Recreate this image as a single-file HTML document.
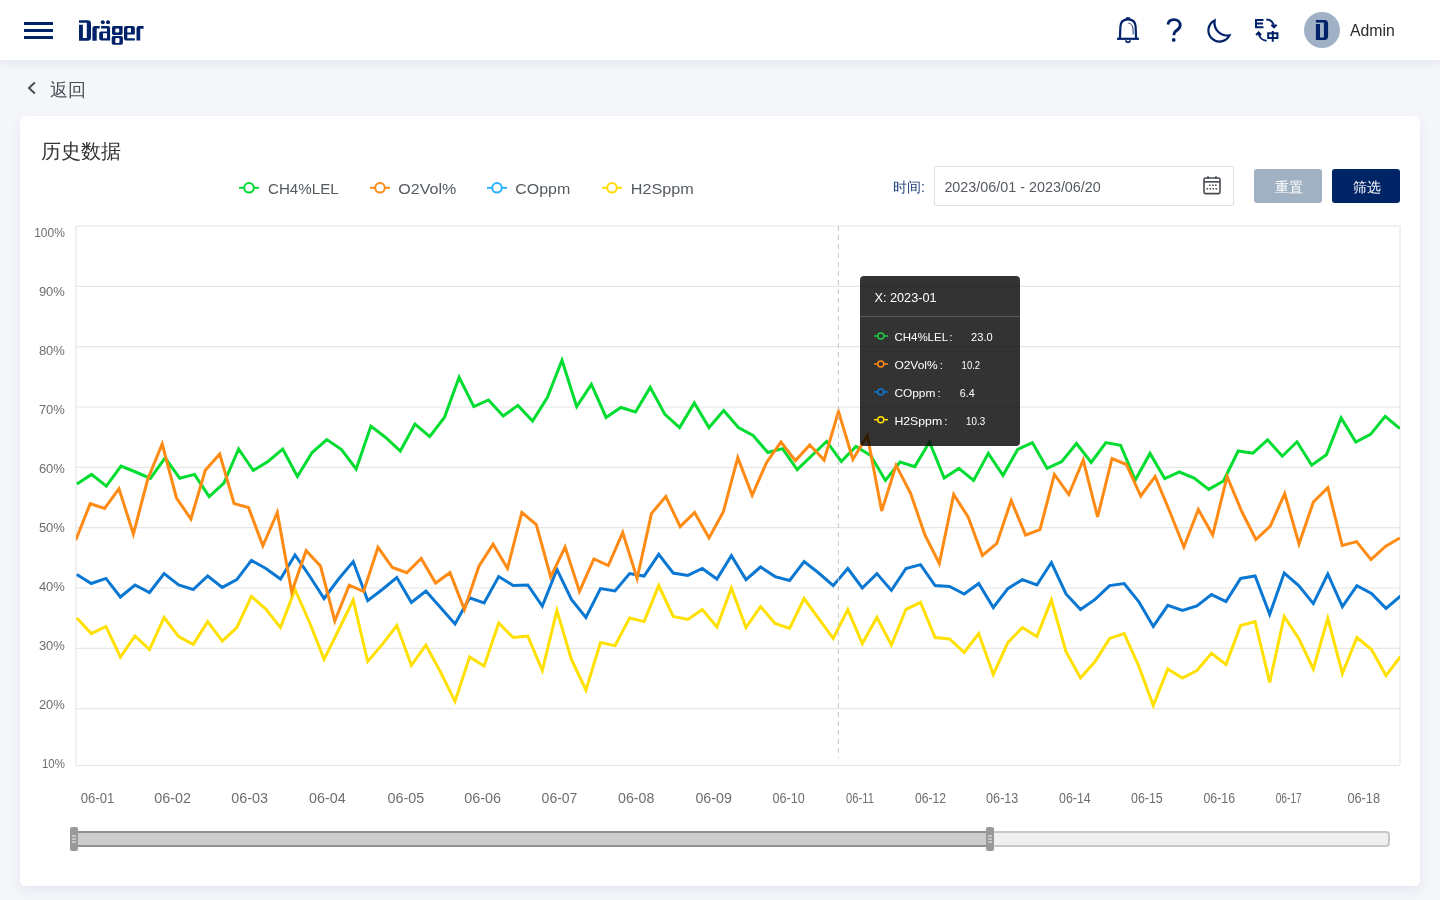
<!DOCTYPE html>
<html><head><meta charset="utf-8">
<style>
*{box-sizing:border-box;margin:0;padding:0}
html,body{width:1440px;height:900px;overflow:hidden}
body{background:#f4f6fa;font-family:"Liberation Sans",sans-serif;position:relative}
.abs{position:absolute}
#hdr{left:0;top:0;width:1440px;height:60px;background:#fff;box-shadow:0 2px 10px rgba(40,60,100,0.10)}
#card{left:20px;top:116px;width:1400px;height:770px;background:#fff;border-radius:5px;box-shadow:0 5px 12px rgba(40,60,100,0.07)}
.t{position:absolute;white-space:nowrap;line-height:1;will-change:transform}
</style></head><body>
<div id="hdr" class="abs"></div>
<div id="card" class="abs"></div>

<!-- header text -->
<!-- back -->
<div class="t" style="left:50px;top:80.5px;font-size:18px;color:#4a4e55">返回</div>
<!-- title -->
<div class="t" style="left:40.5px;top:141.5px;font-size:19.6px;color:#333">历史数据</div>
<!-- legend text -->
<!-- time -->
<div class="t" style="left:892.5px;top:180px;font-size:14px;color:#24447a">时间:</div>
<div class="abs" style="left:934px;top:166px;width:300px;height:40px;border:1px solid #dcdfe4;border-radius:3px;background:#fff"></div>
<div class="abs" style="left:1254px;top:169px;width:68px;height:34px;border-radius:3px;background:#a1b1c4"></div>
<div class="t" style="left:1274.5px;top:180px;font-size:14px;color:#fff">重置</div>
<div class="abs" style="left:1332px;top:169px;width:68px;height:34px;border-radius:3px;background:#002566"></div>
<div class="t" style="left:1352.5px;top:180px;font-size:14px;color:#fff">筛选</div>

<svg class="abs" style="left:0;top:0;will-change:transform" width="1440" height="900" viewBox="0 0 1440 900">
  <!-- hamburger -->
  <g fill="#002366">
    <rect x="24" y="22" width="29" height="3"/>
    <rect x="24" y="29" width="29" height="3"/>
    <rect x="24" y="36" width="29" height="3"/>
  </g>
  <!-- logo -->
  <g fill="#012169" fill-rule="evenodd">
    <path d="M79,20.15 H87.8 Q91,20.15 91,23.5 V37.5 Q91,40.7 87.8,40.7 H79 V24.65 H82.9 V38 H86.8 V22.7 H79 Z"/>
    <path d="M92.4,40.7 V28.3 Q92.4,26 94.8,26 H99.7 V28.6 H96.7 V40.7 Z"/>
    <path d="M101.1,26 H108.3 Q110.1,26 110.1,27.8 V40.4 H101 Q99.2,40.4 99.2,38.6 V33.2 Q99.2,31.4 101,31.4 H107 V28.4 H101.1 Z M103,33.25 V38.2 H107 V33.25 Z"/>
    <circle cx="102.8" cy="22.2" r="2"/><circle cx="108" cy="22.2" r="2"/>
    <path d="M113.8,26 H122.6 V33.2 Q122.6,35 120.8,35 H113.8 Q112,35 112,33.2 V27.8 Q112,26 113.8,26 Z M116.3,28.4 Q115.3,28.4 115.3,29.4 V31.6 Q115.3,32.6 116.3,32.6 H118.2 Q119.2,32.6 119.2,31.6 V29.4 Q119.2,28.4 118.2,28.4 Z"/>
    <path d="M113.5,36 H121.1 Q122.9,36 122.9,37.8 V43 Q122.9,44.75 121.1,44.75 H113.5 Q111.7,44.75 111.7,43 V37.8 Q111.7,36 113.5,36 Z M116.3,37.9 Q115.3,37.9 115.3,38.9 V41.9 Q115.3,42.9 116.3,42.9 H118.5 Q119.5,42.9 119.5,41.9 V38.9 Q119.5,37.9 118.5,37.9 Z"/>
    <path d="M126,26 H132.8 Q134.8,26 134.8,28 V34.5 H127.3 V38.2 H134.8 V40.4 H126 Q124,40.4 124,38.4 V28 Q124,26 126,26 Z M128.3,28 Q127.3,28 127.3,29.2 V32.6 H131 V29.2 Q131,28 130,28 Z"/>
    <path d="M136.5,40.4 V28.3 Q136.5,26 138.8,26 H143.6 V28.7 H140.2 V40.4 Z"/>
  </g>
  <!-- bell -->
  <g fill="none" stroke="#012169" stroke-width="2.2">
    <path d="M1119.9,38.6 L1120.4,26.5 C1120.7,21.8 1123.8,19.3 1128,19.3 C1132.2,19.3 1135.3,21.8 1135.6,26.5 L1136.1,38.6"/>
    <path d="M1117,38.8 H1139"/>
    <path d="M1125.9,40.2 A2.1,2.1 0 0 0 1130.1,40.2" stroke-width="1.6"/>
    <path d="M1128.4,23 C1131,23.6 1132.7,25.5 1132.9,28 L1133.2,34.5" stroke-width="0.9"/>
  </g>
  <rect x="1125.8" y="17.3" width="4.4" height="2.4" rx="0.8" fill="#012169"/>
  <!-- question -->
  <path d="M1168,24.5 C1168.4,20.8 1171,19.6 1174,19.6 C1177.6,19.6 1180.2,22 1180.2,25.2 C1180.2,28.5 1177.4,29.8 1175.5,31.4 C1174.3,32.5 1173.8,33.3 1173.8,35.2" fill="none" stroke="#012169" stroke-width="2.9"/>
  <circle cx="1173.7" cy="39.9" r="1.9" fill="#012169"/>
  <!-- moon -->
  <path d="M1214.66,20.41 A11.1,11.1 0 1 0 1229.49,35.24 A12.75,12.75 0 0 1 1214.66,20.41 Z" fill="none" stroke="#012169" stroke-width="2.2" stroke-linejoin="miter"/>
  <!-- translate -->
  <g fill="none" stroke="#012169" stroke-width="2">
    <path d="M1263.5,19.9 H1256 V27.3 H1263.5 M1256,23.6 H1263"/>
    <path d="M1266.3,19.4 C1270.4,19.6 1273.4,22.2 1274,26.5"/>
    <path d="M1271.4,24.8 L1274,27.3 L1276.6,24.8"/>
    <path d="M1258.6,32.5 C1258.9,37.5 1262.4,40.4 1266.6,40.7"/>
    <path d="M1256.1,35 L1258.6,32.5 L1261.1,35"/>
    <path d="M1268.2,33.2 H1277.4 V38 H1268.2 Z M1272.8,31 V41.8"/>
  </g>
  <!-- avatar -->
  <circle cx="1322" cy="30" r="18" fill="#a0b1c5"/>
  <path d="M1315.9,20.05 H1324.5 Q1328.1,20.05 1328.1,24 V36 Q1328.1,40 1324.5,40 H1315.9 V24.1 H1320 V37.5 H1323.9 V22.5 H1315.9 Z" fill="#012169"/>
  <!-- back chevron -->
  <path d="M34.8,82.5 L29,88 L34.8,93.5" fill="none" stroke="#4a4e55" stroke-width="2"/>

  <!-- legend icons -->
  <g fill="#fff" stroke-width="2">
    <g stroke="#00d930"><path d="M239,187.8 H259"/><circle cx="249" cy="187.8" r="4.8"/></g>
    <g stroke="#ff8c1a"><path d="M370,187.8 H390"/><circle cx="380" cy="187.8" r="4.8"/></g>
    <g stroke="#2bb3ff"><path d="M487,187.8 H507"/><circle cx="497" cy="187.8" r="4.8"/></g>
    <g stroke="#ffdc00"><path d="M602,187.8 H622"/><circle cx="612" cy="187.8" r="4.8"/></g>
  </g>
  <!-- calendar -->
  <g fill="none" stroke="#474b50" stroke-width="1.6">
    <rect x="1204" y="178" width="16" height="15.6" rx="1.5"/>
    <path d="M1204,181.8 H1220"/>
    <path d="M1208,176.2 V179 M1216,176.2 V179"/>
  </g>
  <g fill="#474b50">
    <rect x="1209" y="184.5" width="1.6" height="1.5"/><rect x="1212" y="184.5" width="1.6" height="1.5"/><rect x="1215" y="184.5" width="1.6" height="1.5"/>
    <rect x="1206.5" y="188" width="1.6" height="1.5"/><rect x="1209.5" y="188" width="1.6" height="1.5"/><rect x="1212.5" y="188" width="1.6" height="1.5"/><rect x="1215.5" y="188" width="1.6" height="1.5"/>
  </g>

  <g font-family="Liberation Sans" font-size="15.5" fill="#555b61">
    <text x="268" y="194.2" textLength="70.7" lengthAdjust="spacingAndGlyphs">CH4%LEL</text>
    <text x="398.3" y="194.2" textLength="58" lengthAdjust="spacingAndGlyphs">O2Vol%</text>
    <text x="515.3" y="194.2" textLength="55" lengthAdjust="spacingAndGlyphs">COppm</text>
    <text x="630.8" y="194.2" textLength="62.9" lengthAdjust="spacingAndGlyphs">H2Sppm</text>
  </g>
  <text x="1350" y="36" font-family="Liberation Sans" font-size="15.6" fill="#2b2b2b" textLength="44.8" lengthAdjust="spacingAndGlyphs">Admin</text>
  <text x="944.4" y="192" font-family="Liberation Sans" font-size="14.1" fill="#555a60" textLength="156.4" lengthAdjust="spacingAndGlyphs">2023/06/01 - 2023/06/20</text>
  <!-- chart grid -->
  <g stroke="#e6e6e6" stroke-width="1.2" fill="none"><line x1="76" y1="226.0" x2="1400" y2="226.0"/><line x1="76" y1="286.3" x2="1400" y2="286.3"/><line x1="76" y1="346.7" x2="1400" y2="346.7"/><line x1="76" y1="407.0" x2="1400" y2="407.0"/><line x1="76" y1="467.3" x2="1400" y2="467.3"/><line x1="76" y1="527.6" x2="1400" y2="527.6"/><line x1="76" y1="588.0" x2="1400" y2="588.0"/><line x1="76" y1="648.3" x2="1400" y2="648.3"/><line x1="76" y1="708.6" x2="1400" y2="708.6"/><line x1="76" y1="765.5" x2="1400" y2="765.5"/><line x1="76" y1="226" x2="76" y2="765.5"/><line x1="1400" y1="226" x2="1400" y2="765.5"/></g>
  <g font-family="Liberation Sans" font-size="13.4" fill="#6e6e6e"><text x="34.2" y="236.9" textLength="30.7" lengthAdjust="spacingAndGlyphs">100%</text><text x="38.9" y="295.9" textLength="26" lengthAdjust="spacingAndGlyphs">90%</text><text x="38.9" y="354.9" textLength="26" lengthAdjust="spacingAndGlyphs">80%</text><text x="38.9" y="413.9" textLength="26" lengthAdjust="spacingAndGlyphs">70%</text><text x="38.9" y="472.9" textLength="26" lengthAdjust="spacingAndGlyphs">60%</text><text x="38.9" y="531.9" textLength="26" lengthAdjust="spacingAndGlyphs">50%</text><text x="38.9" y="590.9" textLength="26" lengthAdjust="spacingAndGlyphs">40%</text><text x="38.9" y="649.9" textLength="26" lengthAdjust="spacingAndGlyphs">30%</text><text x="38.9" y="708.9" textLength="26" lengthAdjust="spacingAndGlyphs">20%</text><text x="41.9" y="767.9" textLength="23" lengthAdjust="spacingAndGlyphs">10%</text></g>
  <g font-family="Liberation Sans" font-size="14.6" fill="#6e6e6e"><text x="80.8" y="803" textLength="33.6" lengthAdjust="spacingAndGlyphs">06-01</text><text x="154.2" y="803" textLength="36.7" lengthAdjust="spacingAndGlyphs">06-02</text><text x="231.3" y="803" textLength="36.7" lengthAdjust="spacingAndGlyphs">06-03</text><text x="309.1" y="803" textLength="36.7" lengthAdjust="spacingAndGlyphs">06-04</text><text x="387.5" y="803" textLength="36.8" lengthAdjust="spacingAndGlyphs">06-05</text><text x="464.2" y="803" textLength="36.8" lengthAdjust="spacingAndGlyphs">06-06</text><text x="541.6" y="803" textLength="35.8" lengthAdjust="spacingAndGlyphs">06-07</text><text x="618.0" y="803" textLength="36.4" lengthAdjust="spacingAndGlyphs">06-08</text><text x="695.4" y="803" textLength="36.5" lengthAdjust="spacingAndGlyphs">06-09</text><text x="772.5" y="803" textLength="32.3" lengthAdjust="spacingAndGlyphs">06-10</text><text x="846.1" y="803" textLength="27.8" lengthAdjust="spacingAndGlyphs">06-11</text><text x="914.9" y="803" textLength="31.2" lengthAdjust="spacingAndGlyphs">06-12</text><text x="986.1" y="803" textLength="32.3" lengthAdjust="spacingAndGlyphs">06-13</text><text x="1059.0" y="803" textLength="31.7" lengthAdjust="spacingAndGlyphs">06-14</text><text x="1131.0" y="803" textLength="31.7" lengthAdjust="spacingAndGlyphs">06-15</text><text x="1203.4" y="803" textLength="31.7" lengthAdjust="spacingAndGlyphs">06-16</text><text x="1275.7" y="803" textLength="26" lengthAdjust="spacingAndGlyphs">06-17</text><text x="1347.4" y="803" textLength="32.7" lengthAdjust="spacingAndGlyphs">06-18</text></g>

  <defs><clipPath id="clip"><rect x="76" y="200" width="1324" height="566"/></clipPath></defs>
  <g clip-path="url(#clip)" fill="none" stroke-width="3" stroke-linejoin="miter">
    <path d="M76.8,618.0 L91.3,633.6 L105.9,626.4 L120.4,657.0 L135.0,636.0 L149.5,649.5 L164.1,617.4 L178.6,636.6 L193.2,644.4 L207.7,621.6 L222.3,641.1 L236.8,627.6 L251.4,596.4 L265.9,609.0 L280.5,627.6 L295.0,589.5 L309.6,622.5 L324.1,659.4 L338.6,630.0 L353.2,600.0 L367.7,661.5 L382.3,644.4 L396.8,625.5 L411.4,665.4 L425.9,645.0 L440.5,672.0 L455.0,701.4 L469.6,657.0 L484.1,666.0 L498.7,623.0 L513.2,637.5 L527.8,636.0 L542.3,670.5 L556.9,610.5 L571.4,659.4 L585.9,690.0 L600.5,642.6 L615.0,645.6 L629.6,618.0 L644.1,621.6 L658.7,585.6 L673.2,616.5 L687.8,619.5 L702.3,609.6 L716.9,627.0 L731.4,588.0 L746.0,627.6 L760.5,606.6 L775.1,623.4 L789.6,628.5 L804.1,598.5 L818.7,618.6 L833.2,638.4 L847.8,609.6 L862.3,643.5 L876.9,617.4 L891.4,645.0 L906.0,609.3 L920.5,602.4 L935.1,637.5 L949.6,639.0 L964.2,652.5 L978.7,633.6 L993.3,674.4 L1007.8,642.6 L1022.4,627.6 L1036.9,636.6 L1051.4,600.0 L1066.0,651.6 L1080.5,678.0 L1095.1,661.5 L1109.6,638.4 L1124.2,633.6 L1138.7,666.0 L1153.3,705.6 L1167.8,669.0 L1182.4,678.0 L1196.9,670.5 L1211.5,653.4 L1226.0,664.5 L1240.6,625.5 L1255.1,621.6 L1269.7,682.5 L1284.2,616.5 L1298.7,638.4 L1313.3,669.0 L1327.8,618.3 L1342.4,673.5 L1356.9,637.5 L1371.5,649.5 L1386.0,675.6 L1400.6,656.4" stroke="#ffe000"/>
    <path d="M76.8,574.5 L91.3,583.5 L105.9,578.4 L120.4,597.0 L135.0,585.0 L149.5,592.5 L164.1,573.6 L178.6,585.0 L193.2,589.5 L207.7,576.0 L222.3,587.4 L236.8,579.6 L251.4,560.4 L265.9,568.5 L280.5,579.0 L295.0,555.0 L309.6,576.0 L324.1,598.5 L338.6,579.0 L353.2,561.6 L367.7,600.6 L382.3,589.5 L396.8,577.5 L411.4,602.4 L425.9,591.0 L440.5,607.5 L455.0,624.0 L469.6,597.9 L484.1,603.0 L498.7,576.5 L513.2,585.6 L527.8,585.0 L542.3,606.0 L556.9,569.4 L571.4,599.4 L585.9,617.4 L600.5,588.6 L615.0,591.0 L629.6,573.6 L644.1,576.0 L658.7,554.4 L673.2,573.0 L687.8,575.4 L702.3,568.5 L716.9,579.0 L731.4,555.6 L746.0,579.6 L760.5,567.0 L775.1,576.6 L789.6,580.5 L804.1,561.6 L818.7,573.0 L833.2,585.6 L847.8,568.5 L862.3,588.0 L876.9,573.6 L891.4,590.4 L906.0,568.5 L920.5,564.6 L935.1,585.6 L949.6,586.5 L964.2,594.0 L978.7,583.5 L993.3,607.5 L1007.8,588.6 L1022.4,579.6 L1036.9,585.0 L1051.4,562.5 L1066.0,594.0 L1080.5,609.6 L1095.1,599.4 L1109.6,585.6 L1124.2,583.5 L1138.7,601.5 L1153.3,626.4 L1167.8,605.4 L1182.4,610.5 L1196.9,606.0 L1211.5,594.6 L1226.0,601.5 L1240.6,578.4 L1255.1,576.0 L1269.7,614.4 L1284.2,573.0 L1298.7,585.6 L1313.3,603.6 L1327.8,574.0 L1342.4,606.6 L1356.9,585.6 L1371.5,593.4 L1386.0,608.4 L1400.6,596.0" stroke="#0a78d2"/>
    <path d="M76.9,483.9 L91.6,474.4 L106.3,486.1 L121.0,466.1 L135.7,472.0 L150.4,478.3 L165.1,457.8 L179.8,478.3 L194.5,474.4 L209.2,496.7 L223.9,483.1 L238.6,449.0 L253.3,470.5 L268.0,461.5 L282.7,449.0 L297.4,476.5 L312.1,452.5 L326.8,439.6 L341.5,449.5 L356.2,469.0 L370.9,426.1 L385.6,437.5 L400.3,451.0 L415.0,424.0 L429.7,436.6 L444.4,417.4 L459.1,377.3 L473.8,406.6 L488.5,400.0 L503.2,416.0 L517.9,405.4 L532.6,421.0 L547.3,397.6 L562.0,360.2 L576.7,406.6 L591.4,384.4 L606.1,417.4 L620.8,407.5 L635.5,412.0 L650.2,387.4 L664.9,414.4 L679.6,427.6 L694.3,403.0 L709.0,427.6 L723.7,410.5 L738.4,427.6 L753.1,435.4 L767.8,452.5 L782.5,448.6 L797.2,469.6 L811.9,455.5 L826.6,441.4 L841.3,461.5 L856.0,446.5 L870.7,455.5 L885.4,480.4 L900.1,462.0 L914.8,466.6 L929.5,442.0 L944.2,478.0 L958.9,468.4 L973.6,480.4 L988.3,453.4 L1003.0,475.3 L1017.7,449.5 L1032.4,442.6 L1047.1,468.4 L1061.8,461.5 L1076.5,443.5 L1091.2,462.4 L1105.9,442.6 L1120.6,445.3 L1135.3,480.0 L1150.0,453.4 L1164.7,478.6 L1179.4,472.0 L1194.1,478.0 L1208.8,489.4 L1223.5,481.0 L1238.2,451.0 L1252.9,453.2 L1267.6,439.8 L1282.3,456.2 L1297.0,441.8 L1311.7,465.2 L1326.4,454.8 L1341.1,417.9 L1355.8,442.1 L1370.5,434.4 L1385.2,416.3 L1399.9,428.5" stroke="#00dc30"/>
    <path d="M75.8,540.0 L90.2,503.7 L104.6,508.4 L119.0,488.7 L133.4,534.0 L147.8,479.0 L162.2,444.0 L176.5,498.0 L190.9,519.0 L205.3,470.3 L219.7,454.0 L234.1,503.6 L248.5,507.5 L262.9,545.8 L277.3,512.5 L291.7,592.0 L306.1,550.7 L320.5,566.0 L334.8,621.0 L349.2,585.2 L363.6,591.5 L378.0,547.3 L392.4,567.5 L406.8,572.7 L421.2,558.5 L435.6,583.0 L450.0,572.7 L464.4,609.5 L478.8,566.5 L493.1,544.2 L507.5,568.5 L521.9,512.5 L536.3,524.5 L550.7,577.0 L565.1,547.0 L579.5,591.4 L593.9,559.0 L608.3,565.6 L622.7,532.6 L637.1,578.5 L651.5,513.4 L665.8,496.6 L680.2,526.6 L694.6,512.5 L709.0,538.0 L723.4,511.6 L737.8,457.6 L752.2,495.4 L766.6,462.4 L781.0,442.0 L795.4,460.6 L809.8,445.0 L824.1,460.0 L838.5,411.6 L852.9,459.4 L867.3,435.4 L881.7,511.0 L896.1,465.4 L910.5,493.0 L924.9,535.0 L939.3,563.5 L953.7,494.5 L968.1,517.0 L982.4,555.4 L996.8,543.4 L1011.2,500.5 L1025.6,535.0 L1040.0,529.6 L1054.4,474.4 L1068.8,494.5 L1083.2,460.0 L1097.6,517.0 L1112.0,458.5 L1126.4,464.5 L1140.7,496.0 L1155.1,476.5 L1169.5,511.0 L1183.9,547.0 L1198.3,509.5 L1212.7,535.0 L1227.1,476.5 L1241.5,511.0 L1255.9,539.5 L1270.3,526.0 L1284.7,493.6 L1299.0,544.0 L1313.4,502.0 L1327.8,487.6 L1342.2,545.5 L1356.6,541.6 L1371.0,559.6 L1385.4,546.4 L1399.8,538.0" stroke="#ff8a14"/>
  </g>
  <!-- axis pointer -->
  <line x1="838.4" y1="226" x2="838.4" y2="758" stroke="#c8c8c8" stroke-width="1" stroke-dasharray="5,4"/>

  <!-- slider -->
  <rect x="75" y="832" width="1314" height="14" rx="3" fill="#f0f0f0" stroke="#c8c8c8" stroke-width="2"/>
  <rect x="75" y="832" width="915" height="14" fill="#cccccc" stroke="#909090" stroke-width="2"/>
  <g fill="#9a9a9a">
    <rect x="70" y="827" width="8" height="24" rx="2"/>
    <rect x="986" y="827" width="8" height="24" rx="2"/>
  </g>
  <g fill="#c4c4c4">
    <rect x="72" y="835" width="4" height="2"/><rect x="72" y="838" width="4" height="2"/><rect x="72" y="841" width="4" height="2"/>
    <rect x="988" y="835" width="4" height="2"/><rect x="988" y="838" width="4" height="2"/><rect x="988" y="841" width="4" height="2"/>
  </g>

  <!-- tooltip -->
  <rect x="860" y="276" width="160" height="170" rx="4" fill="rgba(0,0,0,0.8)"/>
  <line x1="860" y1="316.5" x2="1020" y2="316.5" stroke="#5c5c5c" stroke-width="1"/>
  <g font-family="Liberation Sans" fill="#fff" lengthAdjust="spacingAndGlyphs">
    <text x="874.4" y="302" font-size="12.4" textLength="62.3" lengthAdjust="spacingAndGlyphs">X: 2023-01</text>
    <g font-size="11.6">
      <text x="894.4" y="341.1" textLength="53.7" lengthAdjust="spacingAndGlyphs">CH4%LEL</text><text x="949.2" y="341.1">:</text><text x="971.1" y="341.1" textLength="21.6" lengthAdjust="spacingAndGlyphs">23.0</text>
      <text x="894.4" y="368.8" textLength="43.3" lengthAdjust="spacingAndGlyphs">O2Vol%</text><text x="939.8" y="368.8">:</text><text x="961.6" y="368.8" textLength="18.5" lengthAdjust="spacingAndGlyphs">10.2</text>
      <text x="894.4" y="397" textLength="41" lengthAdjust="spacingAndGlyphs">COppm</text><text x="937.5" y="397">:</text><text x="959.8" y="397" textLength="14.9" lengthAdjust="spacingAndGlyphs">6.4</text>
      <text x="894.4" y="424.7" textLength="47.8" lengthAdjust="spacingAndGlyphs">H2Sppm</text><text x="944.3" y="424.7">:</text><text x="966.1" y="424.7" textLength="19" lengthAdjust="spacingAndGlyphs">10.3</text>
    </g>
  </g>
  <g fill="none" stroke-width="1.5">
    <g stroke="#22cc44"><path d="M874,336 H888"/><circle cx="880.8" cy="336" r="3" fill="#333"/></g>
    <g stroke="#ff8a14"><path d="M874,364 H888"/><circle cx="880.8" cy="364" r="3" fill="#333"/></g>
    <g stroke="#0a78d2"><path d="M874,391.9 H888"/><circle cx="880.8" cy="391.9" r="3" fill="#333"/></g>
    <g stroke="#ffe000"><path d="M874,419.7 H888"/><circle cx="880.8" cy="419.7" r="3" fill="#333"/></g>
  </g>
</svg>
</body></html>
